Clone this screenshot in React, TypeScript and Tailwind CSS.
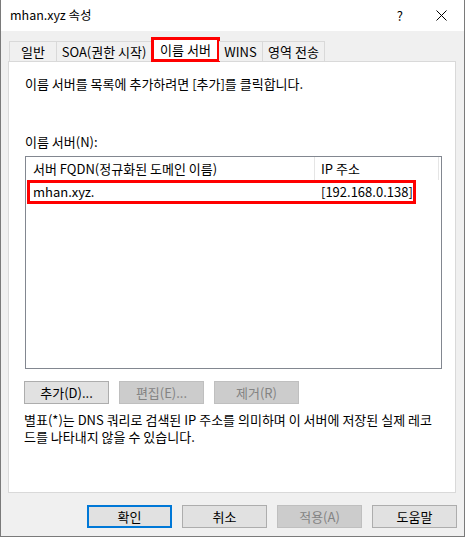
import React from "react";

const FONT = "font-['Noto_Sans_CJK_KR',sans-serif]";

function Btn({
  label,
  disabled,
  primary,
}: {
  label: string;
  disabled?: boolean;
  primary?: boolean;
}) {
  let cls = "bg-[#e1e1e1] border border-[#adadad] text-black";
  if (disabled) cls = "bg-[#cccccc] border border-[#bfbfbf] text-[#838383]";
  if (primary) cls = "bg-[#e1e1e1] border-2 border-[#0078d7] text-black";
  return (
    <div
      className={`w-[85px] h-[23px] flex items-center justify-center text-[13px] leading-none ${cls}`}
    >
      {label}
    </div>
  );
}

function Tab({ label, w }: { label: string; w: number }) {
  return (
    <div
      className="h-[20px] flex items-center justify-center border-t border-r border-[#d9d9d9] bg-[#f0f0f0] text-[13px]"
      style={{ width: w }}
    >
      {label}
    </div>
  );
}

export default function App() {
  return (
    <div
      className={`w-[465px] h-[537px] bg-[#f0f0f0] border-x border-b border-[#7a7a7a] flex flex-col text-black ${FONT}`}
    >
      {/* title bar */}
      <div className="h-[31px] bg-white flex items-center pl-[9px] shrink-0">
        <span className="text-[12.5px]">mhan.xyz 속성</span>
        <span className="ml-auto mr-[33px] text-[13px] leading-none -mt-[1px]">?</span>
        <svg width="11" height="11" viewBox="0 0 11 11" className="mr-[17px]">
          <path d="M0.5 0.5 L10.5 10.5 M10.5 0.5 L0.5 10.5" stroke="#000" strokeWidth="1" />
        </svg>
      </div>

      {/* tabs */}
      <div className="flex h-[20px] mt-[10px] ml-[8px] relative z-10">
        <div className="h-[20px] w-[48px] flex items-center justify-center border-t border-x border-[#d9d9d9] bg-[#f0f0f0] text-[13px]">
          일반
        </div>
        <Tab label="SOA(권한 시작)" w={95} />
        <div className="-mt-[4px] h-[25px] w-[69px] bg-white border-[3px] border-[#ff0000] flex items-center justify-center text-[13px] -ml-[1px] -mr-[1px]">
          이름 서버
        </div>
        <Tab label="WINS" w={44} />
        <Tab label="영역 전송" w={62} />
      </div>

      {/* panel */}
      <div className="ml-[7px] w-[448px] h-[432px] bg-white border border-[#d9d9d9] pt-[14px] pl-[16px] text-[13px] leading-[16px]">
        <div>이름 서버를 목록에 추가하려면 [추가]를 클릭합니다.</div>
        <div className="mt-[42px]">이름 서버(N):</div>

        <div className="mt-[6px] w-[417px] h-[213px] border border-[#828790] relative">
          <div className="flex h-[23px] items-center">
            <div className="w-[289px] h-full flex items-center pl-[7px] border-r border-[#e5e5e5]">
              서버 FQDN(정규화된 도메인 이름)
            </div>
            <div className="w-[124px] h-full flex items-center pl-[6px] border-r border-[#e5e5e5]">
              IP 주소
            </div>
          </div>
          <div className="flex h-[24px] items-center">
            <div className="w-[289px] pl-[7px]">mhan.xyz.</div>
            <div className="pl-[6px]">[192.168.0.138]</div>
          </div>
          <div className="absolute left-[1px] top-[23px] w-[389px] h-[24px] border-[3px] border-[#ff0000]" />
        </div>

        <div className="flex mt-[12px] gap-[10px] -ml-[1px]">
          <Btn label="추가(D)..." />
          <Btn label="편집(E)..." disabled />
          <Btn label="제거(R)" disabled />
        </div>

        <div className="mt-[7px] -ml-[1px] whitespace-nowrap leading-[17px]">
          <div>별표(*)는 DNS 쿼리로 검색된 IP 주소를 의미하며 이 서버에 저장된 실제 레코</div>
          <div>드를 나타내지 않을 수 있습니다.</div>
        </div>
      </div>

      {/* bottom buttons */}
      <div className="flex justify-end mt-[12px] pr-[7px] gap-[10px]">
        <Btn label="확인" primary />
        <Btn label="취소" />
        <Btn label="적용(A)" disabled />
        <Btn label="도움말" />
      </div>
    </div>
  );
}
